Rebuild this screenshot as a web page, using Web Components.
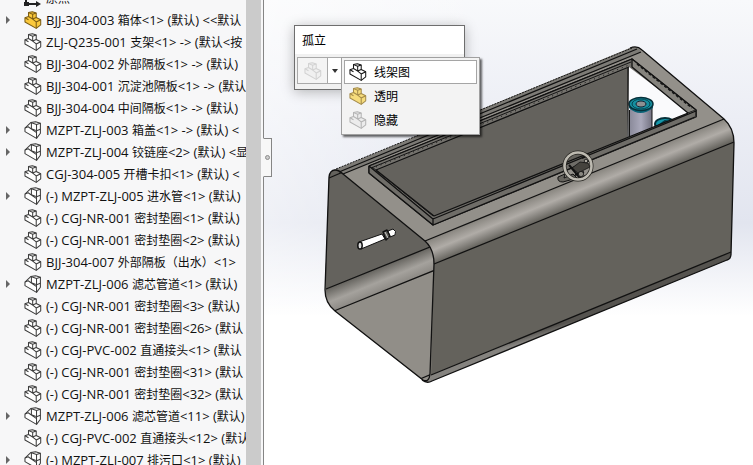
<!DOCTYPE html>
<html lang="zh-CN">
<head>
<meta charset="utf-8">
<title>孤立</title>
<style>
html,body{height:100%}
body{margin:0;font:13px/22px "Open Sans","Noto Sans CJK SC",sans-serif;color:#111;background:#fff}
</style>
</head>
<body>
<cad-app></cad-app>
<script>
const define = (name, html, init) => customElements.define(name, class extends HTMLElement {
  connectedCallback() {
    if (this.shadowRoot) return;
    this.attachShadow({mode: 'open'}).innerHTML = html;
    if (init) init.call(this, this.shadowRoot);
  }
});

define('part-icon', `
<style>
:host{display:block;width:18px;height:18px;flex:none;--f:#fff;--s:#3c3c3c}
:host([tone=gold]){--f:#fbc93c;--s:#7b5c14}
:host([tone=clear]){--f:#f6dc7c;--s:#a48b4a}
:host([tone=faint]){--f:#ececec;--s:#b4b4b4}
:host([tone=off]){--f:#f0f0f0;--s:#d2d2d2}
:host([tone=bold]){--s:#151515}
svg{display:block;width:100%;height:100%}
path{fill:var(--f);stroke:var(--s);stroke-width:3.2;stroke-linejoin:round}
.l{fill:none}
</style><svg viewBox="0 0 54 56" aria-hidden="true"></svg>`, function (r) {
  r.querySelector('svg').innerHTML = this.getAttribute('kind') === 'asm'
    ? '<path d="M2 22 20 5 35 2 50 7V38L38 54 2 33Z"/><path class="l" d="M20 5 38 11 50 7M22 7V24L38 30V11M38 30 50 26M38 30V54M2 22 12 18 38 36"/>'
    : '<path d="M2 21 13 17V5L25 2 37 6V20L51 27V43L37 54 2 34Z"/><path class="l" d="M13 5 26 10 37 6M26 10V25L37 34V54M26 25 37 20M37 34 51 27M2 21 13 27M13 17 26 25"/>';
});

define('tree-row', `
<style>
:host{display:flex;align-items:center;height:22px;padding-left:5px;white-space:nowrap}
button{width:7px;height:14px;border:0;padding:0;background:none;flex:none;margin-right:12px;display:flex;align-items:center}
button svg{display:block;width:6px;height:8px}
.none{visibility:hidden}
.icon{display:flex;flex:none}
.label{margin-left:4px}
.cjk{font-size:12px}
.axis{width:18px;height:18px;flex:none}
</style>
<button type="button" aria-label="展开"><svg viewBox="0 0 6 8"><path d="M1 0 5 4 1 8Z" fill="#666"/></svg></button>
<span class="icon"></span><span class="label"></span>`, function (r) {
  const kind = this.getAttribute('kind');
  if (!this.hasAttribute('more')) r.querySelector('button').className = 'none';
  r.querySelector('.icon').innerHTML = kind === 'axis'
    ? '<svg class="axis" viewBox="0 0 18 18"><path d="M2 1V15H13" fill="none" stroke="#222" stroke-width="2"/><path d="M12 12 17 15 12 18ZM0 13H5V17H0Z" fill="#222"/></svg>'
    : `<part-icon kind="${kind || 'part'}" tone="${this.getAttribute('tone') || ''}"></part-icon>`;
  const label = r.querySelector('.label');
  for (const run of this.getAttribute('text').split(/([\u3400-\u9fff\uff00-\uffef]+)/)) {
    if (!run) continue;
    if (run.charCodeAt(0) < 256) { label.append(run); continue; }
    const s = document.createElement('span');
    s.className = 'cjk'; s.textContent = run; label.append(s);
  }
});

define('feature-tree', `
<style>
:host{display:flex;height:100%;overflow:hidden;background:#f7f7f8;border-right:1px solid #858585;box-sizing:border-box}
.list{flex:1;min-width:0;overflow:hidden}
.rows{margin-top:-13px}
.bar{width:15px;background:#cbcbcb;margin-right:2px;flex:none}
</style><div class="list"><div class="rows" role="tree"></div></div><div class="bar"></div>`, function (r) {
  const rows = [
    ['原点', 'axis'],
    ['BJJ-304-003 箱体<1> (默认) <<默认', 'part', 1, 'gold'],
    ['ZLJ-Q235-001 支架<1> -> (默认<按'],
    ['BJJ-304-002 外部隔板<1> -> (默认)'],
    ['BJJ-304-001 沉淀池隔板<1> -> (默认'],
    ['BJJ-304-004 中间隔板<1> -> (默认)'],
    ['MZPT-ZLJ-003 箱盖<1> -> (默认) <', 'asm', 1],
    ['MZPT-ZLJ-004 铰链座<2> (默认) <显', 'asm', 1],
    ['CGJ-304-005 开槽卡扣<1> (默认) <'],
    ['(-) MZPT-ZLJ-005 进水管<1> (默认)', 'asm', 1],
    ['(-) CGJ-NR-001 密封垫圈<1> (默认)'],
    ['(-) CGJ-NR-001 密封垫圈<2> (默认)'],
    ['BJJ-304-007 外部隔板（出水）<1>'],
    ['MZPT-ZLJ-006 滤芯管道<1> (默认)', 'asm', 1],
    ['(-) CGJ-NR-001 密封垫圈<3> (默认)'],
    ['(-) CGJ-NR-001 密封垫圈<26> (默认'],
    ['(-) CGJ-PVC-002 直通接头<1> (默认'],
    ['(-) CGJ-NR-001 密封垫圈<31> (默认'],
    ['(-) CGJ-NR-001 密封垫圈<32> (默认'],
    ['MZPT-ZLJ-006 滤芯管道<11> (默认)', 'asm', 1],
    ['(-) CGJ-PVC-002 直通接头<12> (默认'],
    ['(-) MZPT-ZLJ-007 排污口<1> (默认)', 'asm', 1]
  ];
  for (const [text, kind, more, tone] of rows) {
    const e = document.createElement('tree-row');
    e.setAttribute('role', 'treeitem');
    e.setAttribute('text', text);
    if (kind) e.setAttribute('kind', kind);
    if (more) e.setAttribute('more', '');
    if (tone) e.setAttribute('tone', tone);
    r.querySelector('.rows').append(e);
  }
});

define('model-view', `
<style>
:host{display:block;height:100%;background:linear-gradient(100deg,#fff8 0,#fff0 40%),linear-gradient(#f8f9fb 0,#eceef5 25%,#e2e5ef 48%,#fff 68%)}
svg{display:block;width:100%;height:100%}
.e{fill:none;stroke:#111;stroke-width:1.3;stroke-linejoin:round}
.t{fill:none;stroke:#151515;stroke-width:1}
</style>
<svg viewBox="264 0 489 465" preserveAspectRatio="xMinYMin slice" role="img" aria-label="箱体模型">
<defs>
<linearGradient id="bend" gradientUnits="userSpaceOnUse" x1="530" y1="199" x2="539" y2="221"><stop offset="0" stop-color="#8a8781"/><stop offset=".45" stop-color="#b0aca7"/><stop offset=".7" stop-color="#8e8b86"/><stop offset="1" stop-color="#65635d"/></linearGradient>
<linearGradient id="inner" gradientUnits="userSpaceOnUse" x1="378" y1="268" x2="387" y2="290"><stop offset="0" stop-color="#65635e"/><stop offset=".55" stop-color="#a5a29d"/><stop offset="1" stop-color="#8b8883"/></linearGradient>
<linearGradient id="low" gradientUnits="userSpaceOnUse" x1="530" y1="333" x2="532" y2="340"><stop offset="0" stop-color="#55534f"/><stop offset="1" stop-color="#85837f"/></linearGradient>
<linearGradient id="tube"><stop offset="0" stop-color="#8b8b9b"/><stop offset=".5" stop-color="#aaa9bb"/><stop offset="1" stop-color="#737281"/></linearGradient>
<clipPath id="window"><path d="M629 67 690 113 627 138Z"/></clipPath>
<clipPath id="mouth"><path d="M329 177Q330 170 335 170Q339 170 343 174L425 241Q434 249 434 264L430 374Q429 383 423 380L335 311Q325 303 325 290Z"/></clipPath>
</defs>
<path d="M329 177Q331 169 337 169L630 48Q637 45 642 50L724 119Q734 128 734 143L731 254Q731 259 727 260L432 381Q427 384 422 380L335 311Q325 303 325 290Z" fill="#93908a"/>
<path d="M334 170 630 48Q637 45 641 52L343 174Z" fill="#7d7b76"/>
<path d="M425 241 724 119Q734 128 734 143L434 264Q434 249 425 241Z" fill="url(#bend)"/>
<path d="M434 264 734 142 731 252 431 375Z" fill="#64625c"/>
<path d="M431 375 731 252Q731 259 727 260L429 382Z" fill="url(#low)"/>
<g clip-path="url(#mouth)">
<path d="M320 160H440V400H320Z" fill="#918e88"/>
<path d="M320 160H440V243L326 289Z" fill="#64625d"/>
<path d="M326 289 440 243V268L335 311 320 312Z" fill="url(#inner)"/>
<path class="e" d="M326 289 440 243M334 311 440 268M420 379 434 373M329 178 343 172"/>
</g>
<path class="t" stroke-dasharray="2 1" d="M336 169 632 48"/>
<path class="e" d="M339 172 637 49M343 174 641 52"/>
<path class="e" d="M425 241 724 119M434 264 734 142M431 375 731 252"/>
<path class="e" d="M329 177Q330 170 335 170Q339 170 343 174L425 241Q434 249 434 264L430 374Q429 383 423 380L335 311Q325 303 325 290ZM630 48Q637 45 642 50L724 119Q734 128 734 143L731 254Q731 259 727 260L432 381Q427 384 422 380"/>
<path class="e" d="M369 166 632 59 696 110V117L433 225 369 173Z" style="fill:#777570"/>
<path d="M376 170 629 67 688 113 434 216Z" fill="#64625d"/>
<path d="M369 166 632 59V67L376 171Z" fill="#74726d"/>
<path class="e" d="M369 166 632 59M376 170 629 67"/><path class="t" d="M371 168 631 62"/>
<path class="t" stroke-dasharray="1 4" d="M376 167 629 65"/>
<path d="M629 67 690 113 627 138Z" fill="#fafafc"/>
<g clip-path="url(#window)">
<path d="M630 105V140H652V105Z" fill="url(#tube)"/><path class="t" d="M629.500 110V140M652 108V140"/>
<path d="M629 103V108Q640 118 653 108V103Z" fill="#0a6377"/>
<ellipse cx="641" cy="104" rx="12" ry="6.500" fill="#168fa0" stroke="#06303a" stroke-width="1.500"/>
<ellipse cx="641" cy="104" rx="9" ry="5" fill="none" stroke="#06444f"/>
<ellipse cx="641" cy="104" rx="5" ry="3" fill="#8c9092" stroke="#123" />
<ellipse cx="665" cy="124" rx="10" ry="6" fill="#1497aa" stroke="#06303a" stroke-width="2"/>
<path d="M658 126 665 121 672 122" stroke="#063d48" stroke-width="2" fill="none"/>
</g>
<path d="M628 68V137" class="e"/>
<path class="e" d="M632 59 696 110 688 113 632 67Z" style="fill:#85837d"/>
<path d="M637 64 692 108" fill="none" stroke="#161616" stroke-width="1.600" stroke-dasharray="3 2"/>
<path d="M369 166 433 217 696 110V117L433 225 369 173Z" fill="#6f6d68"/>
<path class="e" d="M369 166 433 219 696 111M376 170 434 216 688 113M369 173 433 225 695 117M369 166V173M433 218V225M696 110V117"/>
<path class="t" d="M372 167 433 216"/>
<g stroke="#111">
<path d="M558 177Q557 182 563 182L577 178 573 174 564 178 565 174Z" fill="#66645e"/>
<path d="M572 168 580 162 588 163 590 167 578 173Z" fill="#45433e" stroke-width=".8"/>
<path d="M569 165 580 178M582 158 588 155M575 175 584 172" stroke-width="2"/>
<circle cx="578" cy="166" r="13.500" fill="none" stroke="#262521" stroke-width="4"/>
<circle cx="578" cy="166" r="13.500" fill="none" stroke="#bdbab1" stroke-width="2.600"/>
<circle cx="586" cy="161" r="1.800" fill="#aaa79f" stroke-width=".8"/><circle cx="581" cy="174" r="2.600" fill="#8a8881" stroke-width=".8"/>
</g>
<g stroke="#111" stroke-linejoin="round">
<path d="M359 242 382 234 385 239 361 249Z" fill="#fff"/>
<ellipse cx="360" cy="245.500" rx="2.200" ry="3.600" fill="#ddd" stroke-width="1.500"/>
<path d="M388 231 393 229Q397 231 395 235L390 237Z" fill="#fff"/>
<path d="M383 232 387 230 390 236 386 240Z" fill="#5a5953" stroke-width="1.400"/><path d="M385 232 388 238" stroke="#ccc"/>
</g>
</svg>`);

define('menu-item', `
<style>
:host{display:block}
button{display:flex;align-items:center;width:100%;height:24px;box-sizing:border-box;border:1px solid transparent;background:none;padding:0 0 0 4px;gap:7px;font:inherit;color:#000;text-align:left}
:host([active]) button{background:#fff;border-color:#a5a5a5}
</style><button type="button" role="menuitem"><slot name="icon"></slot><slot></slot></button>`);

define('isolate-popup', `
<style>
:host{display:block;width:169px;background:#fff;border:1px solid #6e6e6e;box-shadow:0 2px 12px #0004;font:12px/18px "Noto Sans CJK SC",sans-serif}
.title{padding:5px 7px;color:#000}
.tools{display:flex;background:#f1f1f1;padding:3px 2px 5px}
.tools button{height:27px;box-sizing:border-box;border:1px solid #a9a9a9;padding:0;display:flex;align-items:center;justify-content:center;background:#f4f4f4}
.main{width:31px}.tools .drop{width:15px;margin-left:-1px;background:#fff}
.drop svg{width:6px;height:4px}
.menu{position:absolute;left:46px;top:31px;width:133px;padding:2px;border:1px solid #a0a0a0;background:#f3f3f3;box-shadow:2px 2px 2px #0009}
</style>
<div class="title">孤立</div>
<div class="tools"><button class="main" type="button" aria-label="线架图"><part-icon tone="off"></part-icon></button><button class="drop" type="button" aria-label="更多"><svg viewBox="0 0 6 4"><path d="M0 0H6L3 4Z" fill="#333"/></svg></button></div>
<div class="menu" role="menu">
<menu-item active><part-icon slot="icon" tone="bold"></part-icon>线架图</menu-item>
<menu-item><part-icon slot="icon" tone="clear"></part-icon>透明</menu-item>
<menu-item><part-icon slot="icon" tone="faint"></part-icon>隐藏</menu-item>
</div>`);

define('cad-app', `
<style>
:host{display:grid;grid-template-columns:264px minmax(0,1fr);height:100vh;overflow:hidden}
.stage{position:relative;min-width:0;height:100vh}
isolate-popup{position:absolute;left:30px;top:25px}
.handle{position:absolute;left:-1px;top:138px;width:9px;height:39px;box-sizing:border-box;border:1px solid #858585;border-left-color:#f7f7f7;background:#f7f7f7;padding:0;display:flex;align-items:center;justify-content:center}
.handle i{width:5px;height:5px;box-sizing:border-box;border:1px solid #8c8c8c;border-radius:50%;background:#ccc}
</style>
<feature-tree></feature-tree>
<div class="stage"><model-view></model-view><button class="handle" type="button" aria-label="折叠面板"><i></i></button><isolate-popup></isolate-popup></div>`);
</script>
</body>
</html>
